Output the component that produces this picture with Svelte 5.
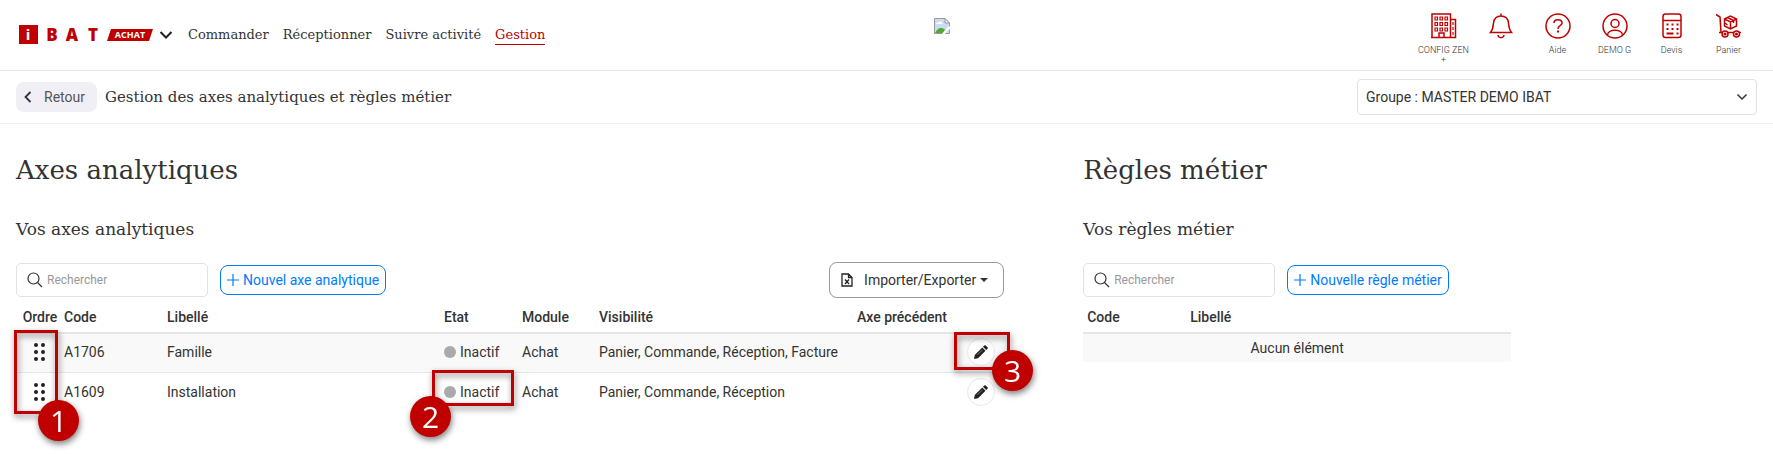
<script>
    let searchAxe = ''
    let searchRegle = ''

    const links = [
        { label: 'Commander' },
        { label: 'Réceptionner' },
        { label: 'Suivre activité' },
        { label: 'Gestion', active: true },
    ]

    const shortcuts = [
        { icon: 'building', label: 'CONFIG ZEN +' },
        { icon: 'bell', label: '' },
        { icon: 'help', label: 'Aide' },
        { icon: 'user', label: 'DEMO G' },
        { icon: 'calc', label: 'Devis' },
        { icon: 'cart', label: 'Panier' },
    ]

    const axes = [
        { code: 'A1706', libelle: 'Famille', etat: 'Inactif', module: 'Achat', visibilite: 'Panier, Commande, Réception, Facture' },
        { code: 'A1609', libelle: 'Installation', etat: 'Inactif', module: 'Achat', visibilite: 'Panier, Commande, Réception' },
    ]
</script>

<header class="topbar">
    <a class="logo" href="#accueil" aria-label="iBAT Achat">
        <svg width="136" height="32" viewBox="0 -6 136 32">
            <rect width="19" height="19" fill="#c00000" />
            <text class="logo-i" x="9" y="15" text-anchor="middle">i</text>
            <g class="logo-letters">
                <text x="33" y="16" text-anchor="middle">B</text>
                <text x="53" y="16" text-anchor="middle">A</text>
                <text x="74" y="16" text-anchor="middle">T</text>
            </g>
            <path d="M92 4H134L130 16H88Z" fill="#c00000" />
            <text class="logo-tag" x="111" y="13" text-anchor="middle">ACHAT</text>
        </svg>
    </a>
    <button class="switch" aria-label="Changer de module">
        <svg width="14" height="10" viewBox="0 0 14 10" fill="none" stroke="#222" stroke-width="2"><path d="M1.5 2L7 7.5L12.5 2" /></svg>
    </button>
    <nav>
        {#each links as link}
            <a href="#menu" class:active={link.active}>{link.label}</a>
        {/each}
    </nav>

    <div class="client-logo">
        <svg width="16" height="16" viewBox="0 0 16 16">
            <path d="M.5 .5H11L15.5 5V15.5H.5Z" fill="#c9dbf5" stroke="#999" />
            <path d="M2 6C2 4.500 4 4.500 4.500 4.500C5 3 7.500 3 8 5C9 5 9 6 9 6Z" fill="#fff" />
            <path d="M1 15C3 11 6 9 9 10.500L12 12L10 15Z" fill="#51a832" />
            <path d="M8 16L11 12L14 9L16 8V11L13 13L11 16Z" fill="#fff" />
            <path d="M11 .5V5H15.5Z" fill="#fff" stroke="#999" />
        </svg>
    </div>

    <div class="shortcuts">
        {#each shortcuts as item}
            <a href="#raccourci" aria-label={item.label || 'Notifications'}>
                <svg width="26" height="26" viewBox="0 0 26 26" fill="none" stroke="#c00000" stroke-width="1.500">
                    {#if item.icon === 'building'}
                        <path d="M1 1H19.500V24.500H1ZM19.500 6.500H24.500V24.500H19.500M0 24.500H25M8 24.500V20H13V24.500" />
                        <path stroke-width="1.200" d="M4 4H6.500V7H4ZM9 4H11.500V7H9ZM14 4H16.500V7H14ZM4 9.500H6.500V12.500H4ZM9 9.500H11.500V12.500H9ZM14 9.500H16.500V12.500H14ZM4 15H6.500V18H4ZM9 15H11.500V18H9ZM14 15H16.500V18H14ZM22 9V12M22 14V17M22 19V22" />
                    {:else if item.icon === 'bell'}
                        <path d="M13 .5V3M2.500 19.500H23.500C21 16.500 21 15 20.500 10C20 5.500 17 3 13 3S6 5.500 5.500 10C5 15 5 16.500 2.500 19.500ZM10 22C10.500 25.500 15.500 25.500 16 22" />
                    {:else if item.icon === 'help'}
                        <circle cx="13" cy="13" r="12" />
                        <path d="M9 10C9 5.500 17 5.500 17 10C17 13 13 12.500 13 16" />
                        <path stroke-width="2" d="M13 17.500V19.500" />
                    {:else if item.icon === 'user'}
                        <circle cx="13" cy="13" r="12" />
                        <circle cx="13" cy="10.500" r="4" />
                        <path d="M5.500 22C6 15.500 20 15.500 20.500 22" />
                    {:else if item.icon === 'calc'}
                        <rect x="4" y="1" width="18" height="23.500" rx="2.500" />
                        <path d="M4 7.500H22" />
                        <path stroke-width="2" stroke-dasharray="2 3" d="M7.500 11.500H20M7.500 16H20" />
                        <path stroke-width="2" d="M7.500 20.500H14.500M17.500 20.500H19.500" />
                    {:else}
                        <path d="M0 1.500L4 4L5 19.500M3 19.500H25" />
                        <circle cx="9" cy="21" r="3" fill="#fff" />
                        <circle cx="20.500" cy="21" r="3" fill="#fff" />
                        <circle cx="9" cy="21" r=".8" />
                        <circle cx="20.500" cy="21" r=".8" />
                        <path d="M8.500 6L14.500 3L20.500 6V13L14.500 16L8.500 13ZM8.500 6L14.500 9L20.500 6M14.500 9V16M11.500 4.500L17.500 7.500V10" />
                        <path d="M9 10L11.500 12" />
                    {/if}
                </svg>
                <span>{item.label}</span>
            </a>
        {/each}
    </div>
</header>

<div class="subbar">
    <button class="back">
        <svg width="8" height="12" viewBox="0 0 8 12" fill="none" stroke="#333" stroke-width="1.800"><path d="M6.500 1L1.500 6L6.500 11" /></svg>
        Retour
    </button>
    <span class="page-title">Gestion des axes analytiques et règles métier</span>
    <div class="group">
        <select aria-label="Groupe">
            <option>Groupe : MASTER DEMO IBAT</option>
        </select>
        <svg width="12" height="8" viewBox="0 0 12 8" fill="none" stroke="#333" stroke-width="1.500"><path d="M1.500 1.500L6 6L10.500 1.500" /></svg>
    </div>
</div>

<main>
    <section>
        <h1>Axes analytiques</h1>
        <h2>Vos axes analytiques</h2>
        <div class="tools">
            <label class="search">
                <svg width="16" height="16" viewBox="0 0 16 16" fill="none" stroke="#333" stroke-width="1.200"><circle cx="6.500" cy="6.500" r="5.500" /><path d="M10.500 10.500L15 15" /></svg>
                <input type="text" placeholder="Rechercher" aria-label="Rechercher un axe" bind:value={searchAxe} />
            </label>
            <button class="add">
                <svg width="12" height="12" viewBox="0 0 12 12" stroke="#007bff" stroke-width="1.200"><path d="M6 0V12M0 6H12" /></svg>
                Nouvel axe analytique
            </button>
            <button class="export">
                <svg width="12" height="14" viewBox="0 0 12 14" fill="none" stroke="#222" stroke-width="1.300"><path d="M1 1H7.500L11 4.500V13H1ZM7.500 1V4.500H11M4 6.500L8 11M8 6.500L4 11" /></svg>
                <span>Importer/Exporter</span>
                <i class="caret"></i>
            </button>
        </div>

        <div class="table-wrap">
            <table class="axes">
                <colgroup>
                    <col class="c-ordre" /><col class="c-code" /><col class="c-libelle" /><col class="c-etat" />
                    <col class="c-module" /><col class="c-visibilite" /><col class="c-axe" /><col />
                </colgroup>
                <thead>
                    <tr>
                        <th class="ordre">Ordre</th>
                        <th>Code</th>
                        <th>Libellé</th>
                        <th>Etat</th>
                        <th>Module</th>
                        <th>Visibilité</th>
                        <th>Axe précédent</th>
                        <th></th>
                    </tr>
                </thead>
                <tbody>
                    {#each axes as axe}
                        <tr>
                            <td class="ordre">
                                <svg class="grip" width="12" height="18" viewBox="0 0 12 18" fill="#222">
                                    <circle cx="2" cy="2" r="2" /><circle cx="9" cy="2" r="2" />
                                    <circle cx="2" cy="9" r="2" /><circle cx="9" cy="9" r="2" />
                                    <circle cx="2" cy="16" r="2" /><circle cx="9" cy="16" r="2" />
                                </svg>
                            </td>
                            <td>{axe.code}</td>
                            <td>{axe.libelle}</td>
                            <td><span class="etat"><i class="dot"></i>{axe.etat}</span></td>
                            <td>{axe.module}</td>
                            <td>{axe.visibilite}</td>
                            <td></td>
                            <td>
                                <button class="edit" aria-label="Modifier">
                                    <svg width="14" height="14" viewBox="0 0 14 14" fill="#222"><path d="M0 14L.8 10L8.300 2.500L11.500 5.700L4 13.200ZM9 1.800L10.300 .5Q11 -.2 11.700 .5L13.500 2.300Q14.200 3 13.500 3.700L12.200 5Z" /><path d="M3.500 9.800L8.500 4.800" stroke="#fff" stroke-width=".4" /></svg>
                                </button>
                            </td>
                        </tr>
                    {/each}
                </tbody>
            </table>

            <!-- numbered help marks over the table -->
            <div class="mark mark-1"><b>1</b></div>
            <div class="mark mark-2"><b>2</b></div>
            <div class="mark mark-3"><b>3</b></div>
        </div>
    </section>

    <section>
        <h1>Règles métier</h1>
        <h2>Vos règles métier</h2>
        <div class="tools">
            <label class="search">
                <svg width="16" height="16" viewBox="0 0 16 16" fill="none" stroke="#333" stroke-width="1.200"><circle cx="6.500" cy="6.500" r="5.500" /><path d="M10.500 10.500L15 15" /></svg>
                <input type="text" placeholder="Rechercher" aria-label="Rechercher une règle" bind:value={searchRegle} />
            </label>
            <button class="add">
                <svg width="12" height="12" viewBox="0 0 12 12" stroke="#007bff" stroke-width="1.200"><path d="M6 0V12M0 6H12" /></svg>
                Nouvelle règle métier
            </button>
        </div>
        <table class="regles">
            <colgroup><col class="c-code" /><col /></colgroup>
            <thead>
                <tr><th>Code</th><th>Libellé</th></tr>
            </thead>
            <tbody>
                <tr><td class="empty" colspan="2">Aucun élément</td></tr>
            </tbody>
        </table>
    </section>
</main>

<style>
:global(body) {
    background: #fff;
    color: #333;
    font-family: Roboto, sans-serif;
    font-size: 14px;
    line-height: 20px;
}

* {
    box-sizing: border-box;
}

button, input, select {
    font-family: inherit;
    font-size: 14px;
    color: #333;
}

button {
    cursor: pointer;
}

a {
    color: inherit;
    text-decoration: none;
}

svg {
    display: block;
    flex: none;
}

.topbar {
    display: flex;
    align-items: center;
    height: 71px;
    padding: 0 16px 0 19px;
    border-bottom: 1px solid #e5e5e5;
}

.logo text {
    font-family: "Open Sans", sans-serif;
    font-weight: 800;
    fill: #fff;
}

.logo .logo-i {
    font-size: 15px;
    font-weight: 700;
}

.logo .logo-letters text {
    font-size: 17px;
    fill: #c00000;
}

.logo .logo-tag {
    font-size: 9px;
    font-weight: 700;
}

.switch {
    padding: 0;
    margin-left: 4px;
    border: 0;
    background: none;
}

nav, .page-title, h1, h2 {
    font-family: "Roboto Slab", "DejaVu Serif", serif;
}

nav {
    display: flex;
    gap: 14px;
    margin-left: 15px;
    font-size: 13px;
}

nav a {
    line-height: 18px;
    border-bottom: 1px solid transparent;
}

nav a.active {
    color: #c00000;
    border-color: #c00000;
}

.client-logo {
    flex: 1;
    display: flex;
    justify-content: center;
    align-self: flex-start;
    padding: 18px 76px 0 0;
}

.shortcuts {
    display: flex;
    align-self: flex-start;
    padding-top: 13px;
}

.shortcuts a {
    display: flex;
    flex-direction: column;
    align-items: center;
    gap: 6px;
    width: 57px;
    font-size: 9px;
    font-weight: 300;
    line-height: 10px;
    text-align: center;
}

.subbar {
    display: flex;
    align-items: center;
    height: 53px;
    padding: 0 16px;
    border-bottom: 1px solid #f2f2f2;
}

.back {
    display: flex;
    align-items: center;
    gap: 12px;
    height: 30px;
    padding: 0 12px 0 8px;
    border: 0;
    border-radius: 8px;
    background: #f0eff5;
    color: #555;
}

.page-title {
    margin-left: 8px;
    font-size: 15px;
}

.group {
    display: flex;
    align-items: center;
    width: 400px;
    margin-left: auto;
    padding-right: 8px;
    border: 1px solid #e2e2e2;
    border-radius: 4px;
}

.group select {
    flex: 1;
    height: 34px;
    padding: 0 8px;
    border: 0;
    background: none;
    appearance: none;
}

main {
    display: grid;
    grid-template-columns: 22fr 15fr;
    column-gap: 79px;
    padding: 28px 16px 44px;
}

h1 {
    margin: 0;
    font-size: 26px;
    font-weight: 400;
    line-height: 36px;
}

h2 {
    margin: 28px 0 20px;
    font-size: 17px;
    font-weight: 400;
    line-height: 26px;
}

.tools {
    display: flex;
    align-items: center;
    height: 36px;
}

.search {
    display: flex;
    align-items: center;
    gap: 4px;
    width: 192px;
    height: 34px;
    padding: 0 10px;
    border: 1px solid #e2e2e2;
    border-radius: 5px;
}

.search input {
    width: 100%;
    padding: 0;
    border: 0;
    outline: 0;
    background: none;
    font-size: 12px;
}

.search input::placeholder {
    color: #999;
}

.add {
    display: flex;
    align-items: center;
    gap: 4px;
    height: 30px;
    margin-left: 12px;
    padding: 0 6px;
    border: 1px solid #007bff;
    border-radius: 8px;
    background: #fff;
    color: #007bff;
}

.export {
    display: flex;
    align-items: center;
    height: 36px;
    margin-left: auto;
    padding: 0 15px 0 11px;
    border: 1px solid #999;
    border-radius: 8px;
    background: #fff;
}

.export span {
    margin: 0 4px 0 11px;
}

.caret {
    border: 4px solid transparent;
    border-top-color: #333;
    border-bottom: 0;
}

.table-wrap {
    position: relative;
}

table {
    width: 100%;
    table-layout: fixed;
    border-collapse: separate;
    border-spacing: 0;
}

th, td {
    padding: 0 4px;
    text-align: left;
    white-space: nowrap;
}

th {
    height: 36px;
    padding-top: 4px;
    font-weight: 500;
    border-bottom: 2px solid #e6e6e6;
}

td {
    height: 39px;
}

tbody tr:nth-child(odd) td {
    background: #f9f9f9;
}

.axes td {
    padding-bottom: 2px;
}

.axes tbody tr:first-child td {
    border-bottom: 1px solid #e6e6e6;
}

.axes .ordre {
    padding-left: 4px;
    padding-right: 0;
    text-align: center;
}

.regles {
    max-width: 428px;
}

.regles td {
    height: 28px;
}

.empty {
    text-align: center;
}

.c-ordre { width: 44px; }
.c-code { width: 103px; }
.c-libelle { width: 277px; }
.c-etat { width: 78px; }
.c-module { width: 77px; }
.c-visibilite { width: 258px; }
.c-axe { width: 105px; }

.grip {
    margin: 0 auto;
}

.etat {
    display: flex;
    align-items: center;
    gap: 4px;
}

.dot {
    width: 12px;
    height: 12px;
    border-radius: 50%;
    background: #aaa;
}

.edit {
    display: flex;
    align-items: center;
    justify-content: center;
    width: 28px;
    height: 28px;
    margin: 0 auto;
    padding: 0;
    border: 1px solid #e8e8e8;
    border-radius: 50%;
    background: #fff;
}

.mark {
    position: absolute;
    border: 3px solid #c00000;
    filter: drop-shadow(1px 3px 3px rgba(0, 0, 0, 0.5));
    pointer-events: none;
}

.mark b {
    position: absolute;
    width: 41px;
    height: 41px;
    border-radius: 50%;
    background: #c00000;
    color: #fff;
    font-family: "Open Sans", sans-serif;
    font-size: 30px;
    font-weight: 500;
    line-height: 41px;
    text-align: center;
}

.mark-1 {
    left: -2px;
    top: 32px;
    width: 44px;
    height: 84px;
}

.mark-1 b {
    left: 21px;
    top: 67px;
}

.mark-2 {
    left: 416px;
    top: 72px;
    width: 82px;
    height: 36px;
}

.mark-2 b {
    left: -25px;
    top: 23px;
}

.mark-3 {
    left: 938px;
    top: 34px;
    width: 56px;
    height: 38px;
}

.mark-3 b {
    left: 35px;
    top: 15px;
}
</style>
